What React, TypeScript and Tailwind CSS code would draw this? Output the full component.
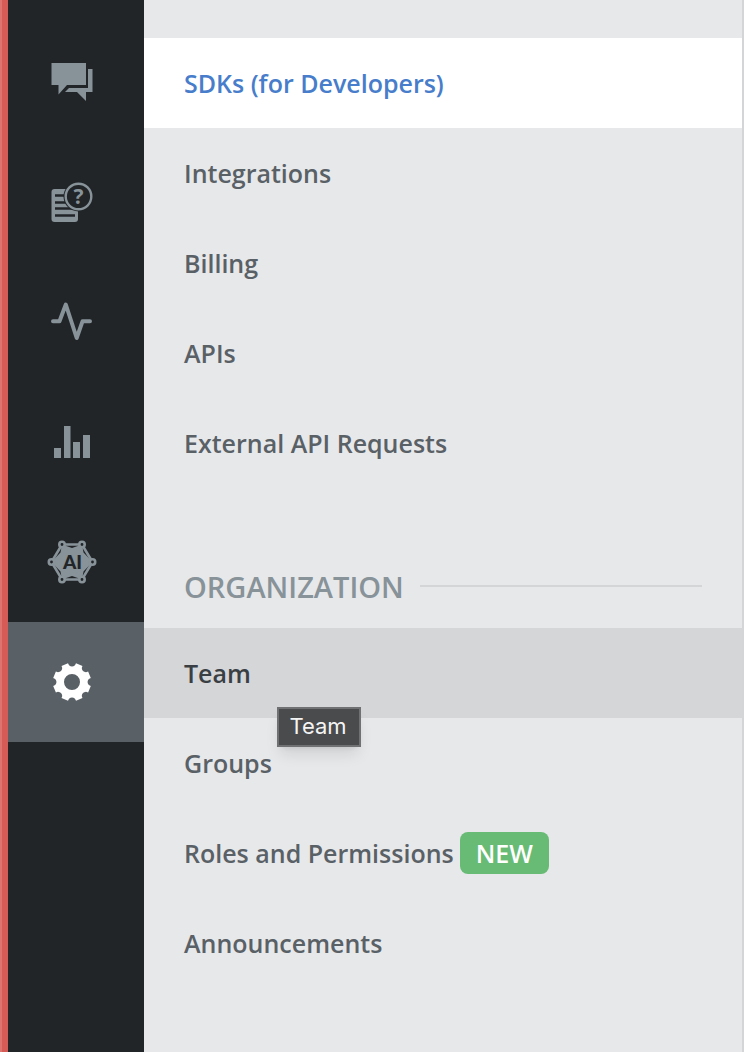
import type { ReactNode } from 'react';

function ChatIcon() {
  return (
    <svg viewBox="0 0 64 64" className="size-16" fill="currentColor" aria-hidden="true">
      <path d="M11.500 13H46v22H27l-8.500 9.500V35h-7z" />
      <path d="M48 19h4.500v23H46v9l-9-9H25l4-4h19z" />
    </svg>
  );
}

function ArticleIcon() {
  return (
    <svg viewBox="0 0 64 64" className="size-16" aria-hidden="true">
      <rect x="11.500" y="19" width="26.500" height="33" rx="3" fill="currentColor" />
      <path d="M15 25.500h16M15 32.500h16M15 38.500h20M15 45.500h20" stroke="#212528" strokeWidth="2.400" />
      <circle cx="38.500" cy="26.500" r="15" fill="#212528" />
      <circle cx="38.500" cy="26.500" r="12.800" fill="#212528" stroke="currentColor" strokeWidth="2.400" />
      <text x="38.500" y="34" textAnchor="middle" fill="currentColor" className="font-['Open_Sans',sans-serif] text-[21px] font-bold">?</text>
    </svg>
  );
}

function PulseIcon() {
  return (
    <svg viewBox="0 0 64 64" className="size-16" fill="none" stroke="currentColor" strokeWidth="4" strokeLinecap="round" strokeLinejoin="round" aria-hidden="true">
      <path d="M13 31.300h6.500L25.800 14.500 36.700 48l5.800-16.700H50" />
    </svg>
  );
}

function BarsIcon() {
  return (
    <svg viewBox="0 0 64 64" className="size-16" fill="currentColor" aria-hidden="true">
      <path d="M14 38h7v10h-7zM24 16h6.500v32H24zM33 32h7v16h-7zM43 25h7v23h-7z" />
    </svg>
  );
}

const nodes = [
  [22, 14.5],
  [42, 14.5],
  [52.5, 32],
  [42, 49.5],
  [22, 49.5],
  [11.5, 32],
];

function AiIcon() {
  return (
    <svg viewBox="0 0 64 64" className="size-16" aria-hidden="true">
      <path d="M22 14.500h20L52.500 32 42 49.500H22L11.500 32z" fill="none" stroke="currentColor" strokeWidth="2.600" />
      <path d="M22 14.500 32 18l10-3.500 1.500 8L52.500 32l-9 9.500-1.500 8L32 46l-10 3.500-1.500-8L11.500 32l9-9.500z" fill="currentColor" />
      {nodes.map(([x, y]) => (
        <circle key={`${x}-${y}`} cx={x} cy={y} r="2.700" fill="#212528" stroke="currentColor" strokeWidth="2.600" />
      ))}
      <text x="32.500" y="38.500" textAnchor="middle" fill="#212528" className="font-[Lato,sans-serif] text-[19px] font-black">AI</text>
    </svg>
  );
}

const toothOutline = [0, 45, 90, 135, 180, 225, 270, 315]
  .map((degrees, i) => {
    const a = (degrees * Math.PI) / 180;
    const p = (x: number, y: number) =>
      `${(32 + x * Math.cos(a) - y * Math.sin(a)).toFixed(2)} ${(32 + x * Math.sin(a) + y * Math.cos(a)).toFixed(2)}`;
    return `${i ? 'L' : 'M'}${p(-4, -18.8)}L${p(-3, -16.8)}Q${p(0, -14.3)} ${p(3, -16.8)}L${p(4, -18.8)}`;
  })
  .join('');

function GearIcon() {
  return (
    <svg viewBox="0 0 64 64" className="size-16" fill="currentColor" aria-hidden="true">
      <path fillRule="evenodd" d={`${toothOutline}ZM24 32a8 8 0 1 0 16 0a8 8 0 1 0-16 0Z`} />
    </svg>
  );
}

function RailLink({ label, active, children }: { label: string; active?: boolean; children: ReactNode }) {
  return (
    <a
      href="#"
      aria-label={label}
      className={`flex h-30 items-center justify-center pr-2 ${active ? 'bg-[#596066] text-white' : 'text-[#879299]'}`}
    >
      {children}
    </a>
  );
}

function MenuLink({ className = 'text-[#596066]', children }: { className?: string; children: ReactNode }) {
  return (
    <a href="#" className={`flex h-[90px] items-center gap-1.5 px-10 pt-0.5 ${className}`}>
      {children}
    </a>
  );
}

export default function App() {
  return (
    <div className="flex min-h-screen bg-[#e7e8ea] font-['Open_Sans','Noto_Sans',sans-serif] text-[25px] font-semibold">
      <nav aria-label="Main" className="w-36 shrink-0 border-l-2 border-[#de7470] bg-[#212528]">
        <div className="min-h-screen border-l-6 border-[#d65b56] pt-[22px]">
          <RailLink label="Conversations"><ChatIcon /></RailLink>
          <RailLink label="FAQs"><ArticleIcon /></RailLink>
          <RailLink label="Activity"><PulseIcon /></RailLink>
          <RailLink label="Analytics"><BarsIcon /></RailLink>
          <RailLink label="AI"><AiIcon /></RailLink>
          <RailLink label="Settings" active><GearIcon /></RailLink>
        </div>
      </nav>
      <main className="min-w-0 flex-1 border-r-2 border-[#d4d5d7] pt-[38px]">
        <MenuLink className="bg-white text-[#477dca]">SDKs (for Developers)</MenuLink>
        <MenuLink>Integrations</MenuLink>
        <MenuLink>Billing</MenuLink>
        <MenuLink>APIs</MenuLink>
        <MenuLink>External API Requests</MenuLink>
        <div className="mt-[78px] flex h-[62px] items-start gap-4 px-10">
          <h2 className="text-[29px] leading-[42px] font-semibold text-[#879299]">ORGANIZATION</h2>
          <div className="mt-[19px] h-0.5 flex-1 bg-[#d4d5d7]" />
        </div>
        <div className="relative">
          <MenuLink className="bg-[#d5d6d8] text-[#3a3f44]">Team</MenuLink>
          <div
            role="tooltip"
            className="absolute top-[79px] left-[133px] flex h-10 w-[84px] items-center justify-center border-2 border-[#707173] bg-[#4a4b4d] pr-0.5 pb-0.5 font-[Inter,sans-serif] text-[22px] font-normal text-[#f4f4f4] shadow-lg"
          >
            Team
          </div>
        </div>
        <MenuLink>Groups</MenuLink>
        <MenuLink>
          Roles and Permissions
          <span className="mb-0.5 flex h-[42px] items-center rounded-lg bg-[#68bb74] px-4 pt-0.5 text-white">NEW</span>
        </MenuLink>
        <MenuLink>Announcements</MenuLink>
      </main>
    </div>
  );
}
